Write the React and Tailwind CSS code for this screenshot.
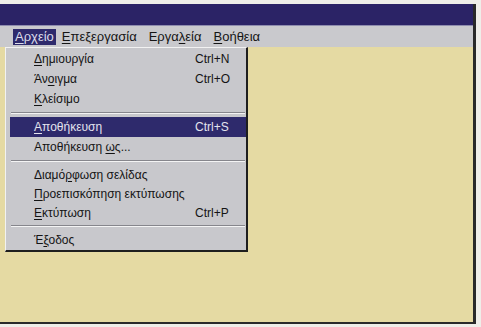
import React from "react"

const font = { fontFamily: '"Liberation Sans", Arial, sans-serif' }

const U = ({ children }) => <span className="underline underline-offset-2">{children}</span>

const Item = ({ label, shortcut, active, short }) => (
  <div
    className={
      (short ? "h-[19px] " : "h-[20px] ") +
      "flex items-center pl-[24px] " +
      (active ? "bg-[#2e2a6c] text-[#e4e4ee]" : "text-[#141414]")
    }
  >
    <span className="flex-1">{label}</span>
    {shortcut && <span className="w-[51px]">{shortcut}</span>}
  </div>
)

const Sep = () => (
  <div className="h-[8px] flex flex-col justify-center px-[1px]">
    <div className="h-px bg-[#86868c]" />
    <div className="h-px bg-[#f4f4f4]" />
  </div>
)

const App = () => {
  return (
    <div className="w-[481px] h-[327px] bg-[#efeee9] pt-[4px] overflow-hidden" style={font}>
      <div className="w-[476px] h-[320px] flex flex-col border-r-[3px] border-b-[2px] border-[#2a2a2a]">
        <div className="h-[21px] bg-[#2b2366]" />
        <div className="h-px bg-[#8e8cae]" />
        <div className="h-[21px] bg-[#c9c9cd] flex items-center pl-[13px] text-[13px] text-[#151515]">
          <div className="h-[16px] px-[2px] flex items-center bg-[#2e2a6c] text-[#dcdcea]">
            <U>Α</U>ρχείο
          </div>
          <div className="px-[6px]">
            <U>Ε</U>πεξεργασία
          </div>
          <div className="px-[6px]">
            Εργα<U>λ</U>εία
          </div>
          <div className="px-[6px]">
            <U>Β</U>οήθεια
          </div>
        </div>
        <div className="flex-1 relative bg-[#e5daa3]">
          <div className="absolute left-[5px] top-0 w-[243px] bg-[#c8c8cc] border-t border-l border-[#f2f2f2] border-r-[2px] border-b-[2px] border-r-[#1e1e1e] border-b-[#1e1e1e] pt-[1px] pb-[1px] pl-[4px] pr-0 text-[12px]">
            <Item label={<><U>Δ</U>ημιουργία</>} shortcut="Ctrl+N" />
            <Item label={<>Άν<U>ο</U>ιγμα</>} shortcut="Ctrl+O" />
            <Item label={<><U>Κ</U>λείσιμο</>} />
            <Sep />
            <Item label={<><U>Α</U>ποθήκευση</>} shortcut="Ctrl+S" active />
            <Item label={<>Αποθήκευση <U>ω</U>ς...</>} />
            <Sep />
            <Item short label={<>Διαμό<U>ρ</U>φωση σελίδας</>} />
            <Item short label={<><U>Π</U>ροεπισκόπηση εκτύπωσης</>} />
            <Item short label={<><U>Ε</U>κτύπωση</>} shortcut="Ctrl+P" />
            <Sep />
            <Item short label={<>Έ<U>ξ</U>οδος</>} />
          </div>
        </div>
      </div>
    </div>
  )
}

export default App
